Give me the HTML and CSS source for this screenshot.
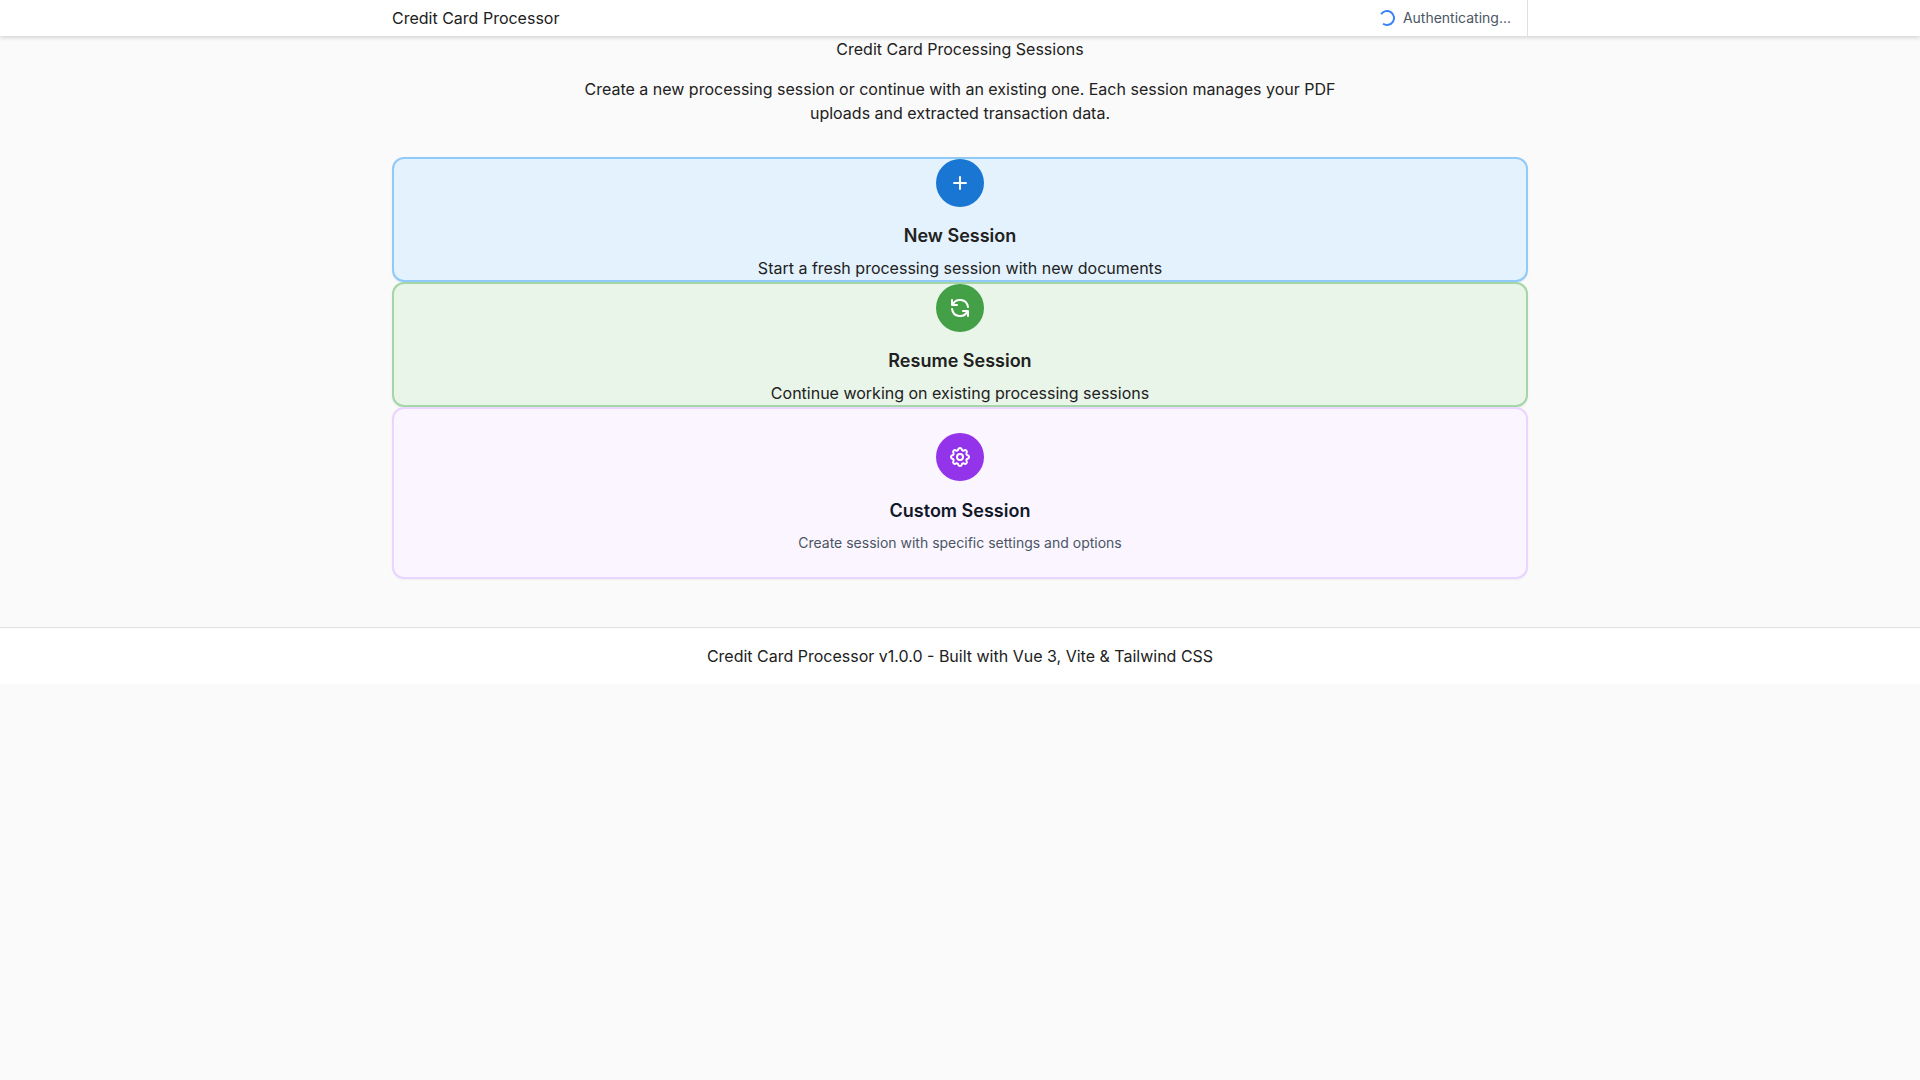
FILE: index.html
```html
<!DOCTYPE html>
<html lang="en">
<head>
<meta charset="utf-8">
<title>Credit Card Processor</title>
<link rel="stylesheet" href="styles.css">
</head>
<body>
<header class="site-header">
  <div class="container header-row">
    <h1 class="brand">Credit Card Processor</h1>
    <div class="auth">
      <svg class="spinner" viewBox="0 0 16 16" fill="none"><path d="M2.1 4.2A7 7 0 1 1 4 13.7" stroke="currentColor" stroke-width="2"/></svg>
      <span>Authenticating...</span>
    </div>
  </div>
</header>
<main class="container main">
  <h2 class="title">Credit Card Processing Sessions</h2>
  <p class="intro">Create a new processing session or continue with an existing one. Each session manages your PDF uploads and extracted transaction data.</p>
  <section class="cards">
    <article class="card card-new">
      <div class="badge"><svg class="icon" viewBox="0 0 24 24"><path d="M12 6v12m6-6H6"/></svg></div>
      <h3 class="card-title">New Session</h3>
      <p class="card-text">Start a fresh processing session with new documents</p>
    </article>
    <article class="card card-resume">
      <div class="badge"><svg class="icon" viewBox="0 0 24 24"><path d="M4 4v5h.582m15.356 2A8.001 8.001 0 004.582 9m0 0H9m11 11v-5h-.581m0 0a8.003 8.003 0 01-15.357-2m15.357 2H15"/></svg></div>
      <h3 class="card-title">Resume Session</h3>
      <p class="card-text">Continue working on existing processing sessions</p>
    </article>
    <article class="card card-custom">
      <div class="badge"><svg class="icon" viewBox="0 0 24 24"><path d="M10.325 4.317c.426-1.756 2.924-1.756 3.35 0a1.724 1.724 0 002.573 1.066c1.543-.94 3.31.826 2.37 2.37a1.724 1.724 0 001.065 2.572c1.756.426 1.756 2.924 0 3.35a1.724 1.724 0 00-1.066 2.573c.94 1.543-.826 3.31-2.37 2.37a1.724 1.724 0 00-2.572 1.065c-.426 1.756-2.924 1.756-3.35 0a1.724 1.724 0 00-2.573-1.066c-1.543.94-3.31-.826-2.37-2.37a1.724 1.724 0 00-1.065-2.572c-1.756-.426-1.756-2.924 0-3.35a1.724 1.724 0 001.066-2.573c-.94-1.543.826-3.31 2.37-2.37.996.608 2.296.07 2.572-1.065z"/><path d="M15 12a3 3 0 11-6 0 3 3 0 016 0z"/></svg></div>
      <h3 class="card-title">Custom Session</h3>
      <p class="card-text">Create session with specific settings and options</p>
    </article>
  </section>
</main>
<footer class="site-footer">Credit Card Processor v1.0.0 - Built with Vue 3, Vite &amp; Tailwind CSS</footer>
</body>
</html>
```
FILE: styles.css
```css
* { box-sizing: border-box; margin: 0; }
body { background: #fafafa; color: #212121; font: 400 16px/24px Inter, sans-serif; }
.container { width: 1136px; margin: 0 auto; }
.site-header { height: 36px; background: #fff; box-shadow: 0 2px 4px rgba(0,0,0,.14); position: relative; }
.header-row { display: flex; justify-content: space-between; align-items: center; height: 36px; }
.brand, .title { font-size: 16px; font-weight: 400; }
.auth { display: flex; align-items: center; gap: 8px; height: 36px; padding: 0 16px; border-right: 1px solid #e0e0e0; color: #4b5563; font-size: 14px; }
.spinner { width: 16px; height: 16px; color: #3b82f6; }
.main { padding: 1px 0 48px; text-align: center; }
.intro { width: 768px; margin: 16px auto 32px; }
.card { border: 2px solid; border-radius: 12px; box-shadow: 0 1px 2px rgba(0,0,0,.08); }
.card-new { background: #e3f2fd; border-color: #90caf9; }
.card-resume { background: #e8f5e8; border-color: #a5d6a7; }
.card-custom { background: #faf5ff; border-color: #e9d5ff; padding: 24px; box-shadow: 0 1px 2px rgba(0,0,0,.05); }
.badge { display: flex; align-items: center; justify-content: center; width: 48px; height: 48px; margin: 0 auto 16px; border-radius: 50%; color: #fff; }
.card-new .badge { background: #1976d2; }
.card-resume .badge { background: #43a047; }
.card-custom .badge { background: #9333ea; }
.icon { width: 24px; height: 24px; fill: none; stroke: currentColor; stroke-width: 2; stroke-linecap: round; stroke-linejoin: round; }
.card-title { font-size: 18px; line-height: 25.2px; font-weight: 600; margin-bottom: 8px; }
.card-custom .card-title { color: #111827; line-height: 28px; }
.card-custom .card-text { color: #4b5563; font-size: 14px; line-height: 20px; }
.site-footer { height: 57px; padding-top: 16px; border-top: 1px solid #e0e0e0; background: #fff; text-align: center; }
```
